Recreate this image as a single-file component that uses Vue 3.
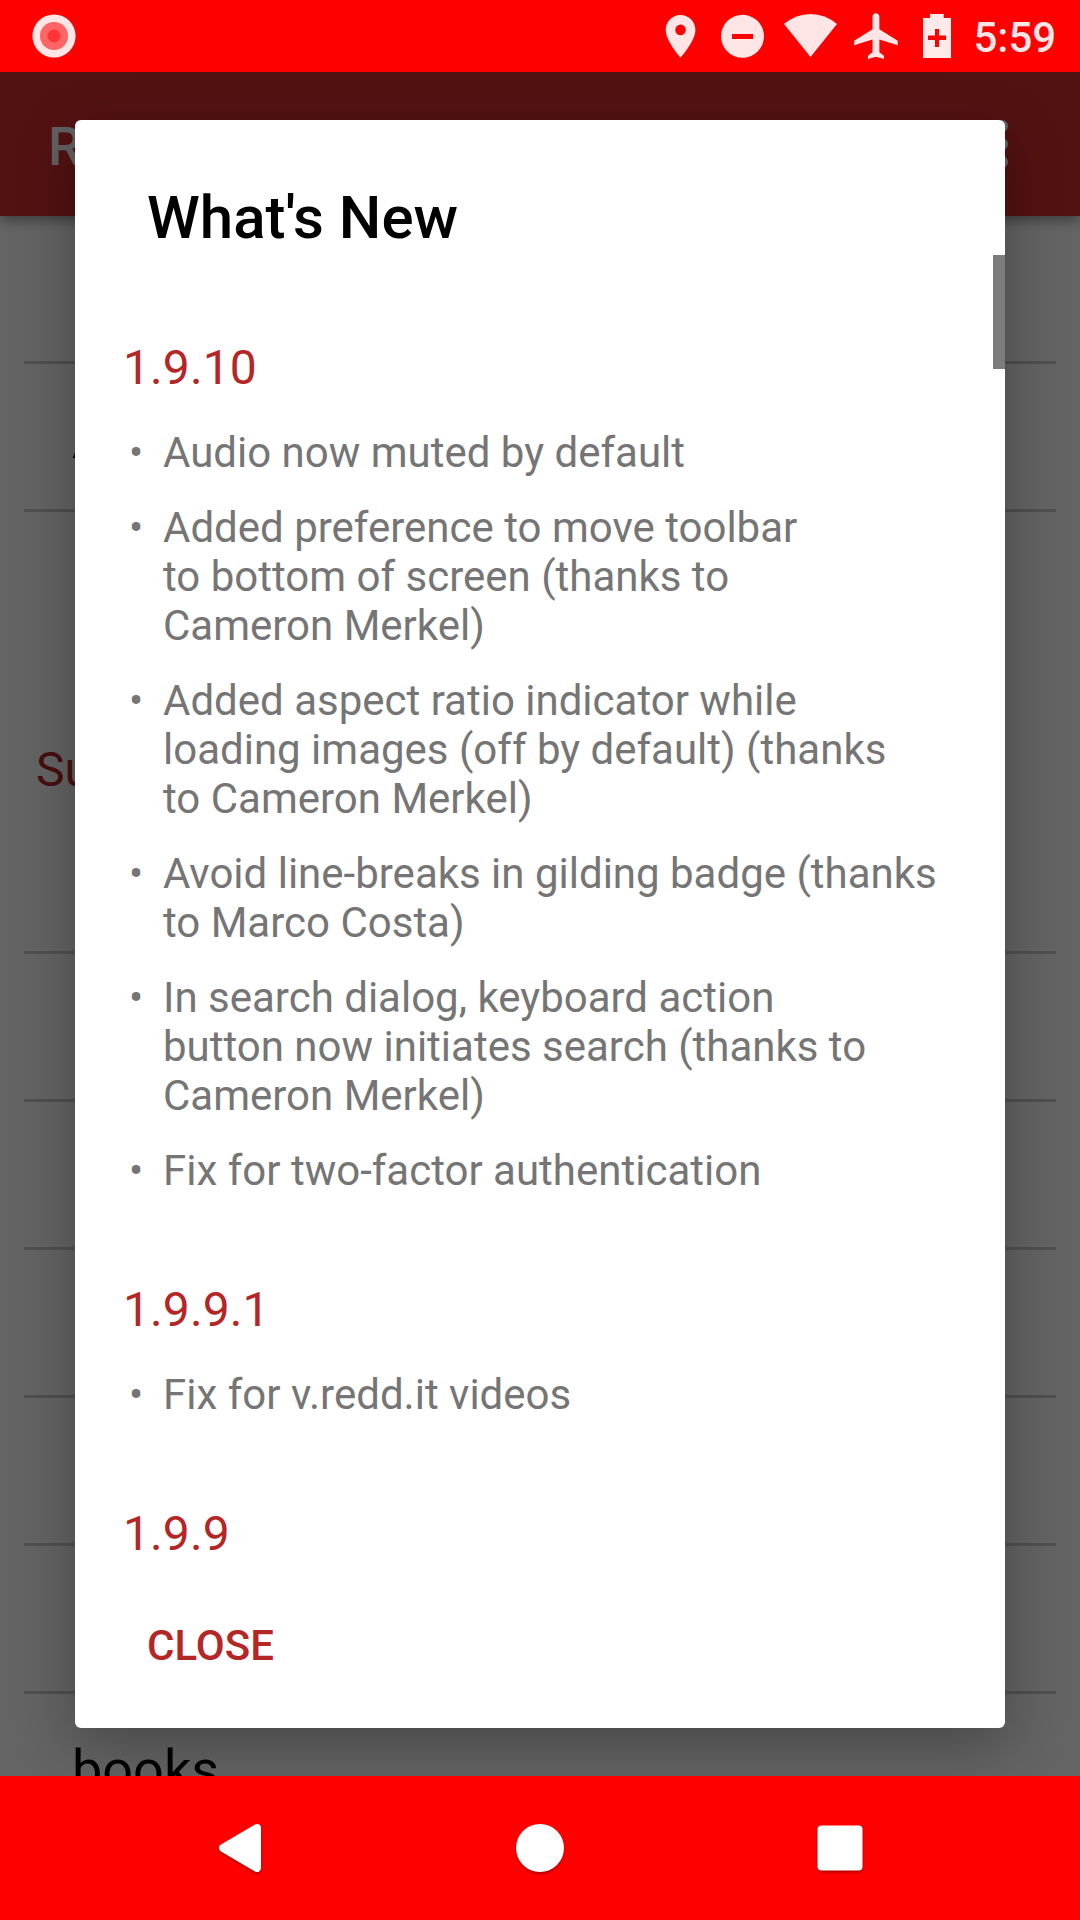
<script setup>
const releases = [
  {
    version: '1.9.10',
    notes: [
      ['Audio now muted by default'],
      ['Added preference to move toolbar', 'to bottom of screen (thanks to', 'Cameron Merkel)'],
      ['Added aspect ratio indicator while', 'loading images (off by default) (thanks', 'to Cameron Merkel)'],
      ['Avoid line-breaks in gilding badge (thanks', 'to Marco Costa)'],
      ['In search dialog, keyboard action', 'button now initiates search (thanks to', 'Cameron Merkel)'],
      ['Fix for two-factor authentication'],
    ],
  },
  { version: '1.9.9.1', notes: [['Fix for v.redd.it videos']] },
  { version: '1.9.9', notes: [] },
]

const rows = [
  { kind: 'item', text: '' },
  { kind: 'item', text: 'A' },
  { kind: 'gap', text: '' },
  { kind: 'section', text: 'Su' },
  { kind: 'item', text: 'a' },
  { kind: 'item', text: '' },
  { kind: 'item', text: '' },
  { kind: 'item', text: '' },
  { kind: 'item', text: '' },
  { kind: 'item', text: '' },
  { kind: 'item', text: 'books' },
]
</script>

<template>
  <div class="screen">
    <header class="status">
      <svg class="record" width="44" height="44" viewBox="0 0 44 44">
        <circle cx="22" cy="22" r="21.6" fill="#ffe5e5" />
        <circle cx="22" cy="22" r="14" fill="#ff6565" />
        <circle cx="22" cy="22" r="6.5" fill="#ff3535" />
      </svg>
      <svg class="icons" width="320" height="72" viewBox="640 0 320 72" fill="#ffe5e5">
        <path transform="translate(655.1 10.8) scale(2.12)" d="M12 2C8.13 2 5 5.13 5 9c0 5.25 7 13 7 13s7-7.75 7-13c0-3.87-3.13-7-7-7zm0 9.500a2.500 2.500 0 0 1 0-5 2.500 2.500 0 0 1 0 5z" />
        <path fill-rule="evenodd" d="M742.5 14.800a21.500 21.500 0 1 0 0 43a21.500 21.500 0 1 0 0-43zM732 34h21v5h-21z" />
        <path d="M784 24Q796 14 810.500 14T837 24L810.500 57z" />
        <path transform="translate(849.600 8.700) scale(2.29)" d="M21 16v-2l-8-5V3.500c0-.83-.67-1.500-1.500-1.500S10 2.670 10 3.500V9l-8 5v2l8-2.500V19l-2 1.500V22l3.500-1 3.500 1v-1.500L13 19v-5.500l8 2.500z" />
        <path fill="#ffeaea" fill-rule="evenodd" d="M930 14h13.700v4H951v40h-28V18h7zM935 29v6.500h-7v4.500h7v7h4v-7h7v-4.500h-7V29z" />
      </svg>
      <span class="clock">5:59</span>
    </header>

    <main class="app">
      <div class="toolbar">
        <span class="title">R</span>
        <svg width="12" height="54" viewBox="0 0 12 54" fill="#fff">
          <circle cx="6" cy="9" r="6" />
          <circle cx="6" cy="27" r="6" />
          <circle cx="6" cy="45" r="6" />
        </svg>
      </div>
      <div class="list">
        <div v-for="(row, i) in rows" :key="i" :class="['row', row.kind]">{{ row.text }}</div>
      </div>

      <div class="scrim">
        <section class="dialog">
          <h1>What's New</h1>
          <div class="content">
            <div class="thumb"></div>
            <article v-for="r in releases" :key="r.version">
              <h2>{{ r.version }}</h2>
              <ul v-if="r.notes.length">
                <li v-for="(note, i) in r.notes" :key="i">
                  <span class="bullet">•</span>
                  <div>
                    <div v-for="line in note" :key="line">{{ line }}</div>
                  </div>
                </li>
              </ul>
            </article>
          </div>
          <div class="actions"><button>CLOSE</button></div>
        </section>
      </div>
    </main>

    <nav class="nav">
      <svg width="1080" height="144" viewBox="0 0 1080 144">
        <g class="keys" fill="#fff" stroke="#fff" stroke-linejoin="round">
          <path d="M257 52L223 72L257 92z" stroke-width="8" />
          <circle cx="540" cy="72" r="24" stroke="none" />
          <rect x="817.500" y="49.500" width="45" height="45" rx="4" stroke="none" />
        </g>
      </svg>
    </nav>
  </div>
</template>

<style>
body {
  margin: 0;
}
</style>

<style scoped>
.screen {
  width: 1080px;
  height: 1920px;
  display: flex;
  flex-direction: column;
  overflow: hidden;
  font-family: Roboto, sans-serif;
}
.status {
  flex: none;
  height: 72px;
  box-sizing: border-box;
  padding-left: 32px;
  display: flex;
  align-items: center;
  background: #f00;
}
.status > * {
  flex: none;
}
.icons {
  margin-left: 564px;
}
.clock {
  margin-left: 13.5px;
  padding-top: 2px;
  font-size: 42px;
  font-weight: 500;
  line-height: 49px;
  color: #ffe5e5;
  white-space: nowrap;
}
.app {
  position: relative;
  flex: none;
  height: 1704px;
  overflow: hidden;
  background: #fafafa;
}
.toolbar {
  position: relative;
  height: 144px;
  box-sizing: border-box;
  padding: 0 72px 0 48px;
  display: flex;
  align-items: center;
  justify-content: space-between;
  background: #cf2e2e;
  box-shadow: 0 4px 12px rgba(0, 0, 0, 0.4);
  color: #f4f4f4;
  font-size: 54px;
  font-weight: 500;
}
.title {
  padding-top: 4px;
}
.row {
  box-sizing: border-box;
  margin: 0 24px;
  white-space: nowrap;
}
.item {
  height: 148px;
  padding-left: 48px;
  border-bottom: 3px solid #c9c9c9;
  font-size: 54px;
  line-height: 152px;
  color: #000;
}
.gap {
  height: 147px;
}
.section {
  height: 147px;
  padding-left: 12px;
  font-size: 48px;
  line-height: 222px;
  color: #b52626;
}
.scrim {
  position: absolute;
  inset: 0;
  box-sizing: border-box;
  padding: 48px 75px;
  display: flex;
  background: rgba(0, 0, 0, 0.6);
}
.dialog {
  flex: 1;
  display: flex;
  flex-direction: column;
  background: #fff;
  border-radius: 6px;
  box-shadow: 0 16px 60px rgba(0, 0, 0, 0.3);
}
h1 {
  flex: none;
  height: 135px;
  box-sizing: border-box;
  margin: 0;
  padding: 62px 72px 0;
  font-size: 60px;
  font-weight: 500;
  line-height: 72px;
  color: #000;
}
.content {
  position: relative;
  flex: 1;
  min-height: 0;
  overflow: hidden;
  padding: 85px 48px 0;
}
.thumb {
  position: absolute;
  top: 0;
  right: 0;
  width: 12px;
  height: 114px;
  background: #7c7c7c;
}
article {
  margin-bottom: 87px;
}
h2 {
  margin: 0;
  font-size: 48px;
  font-weight: 400;
  line-height: 56px;
  letter-spacing: 0.1px;
  color: #b52626;
}
ul {
  list-style: none;
  margin: 32px 0 0;
  padding: 0 0 0 6px;
  display: flex;
  flex-direction: column;
  gap: 26px;
}
li {
  display: flex;
  font-size: 42px;
  line-height: 49px;
  color: #757575;
  white-space: nowrap;
}
.bullet {
  flex: none;
  width: 34px;
}
.actions {
  flex: none;
  height: 130px;
  padding: 23px 72px 0;
  box-sizing: border-box;
}
button {
  border: 0;
  padding: 0;
  background: none;
  font: 500 42px/49px Roboto, sans-serif;
  color: #b52626;
}
.nav {
  flex: none;
  height: 144px;
  background: #f00;
}
.nav svg {
  display: block;
}
.keys {
  filter: drop-shadow(0 2px 1px rgba(0, 0, 0, 0.3));
}
</style>
